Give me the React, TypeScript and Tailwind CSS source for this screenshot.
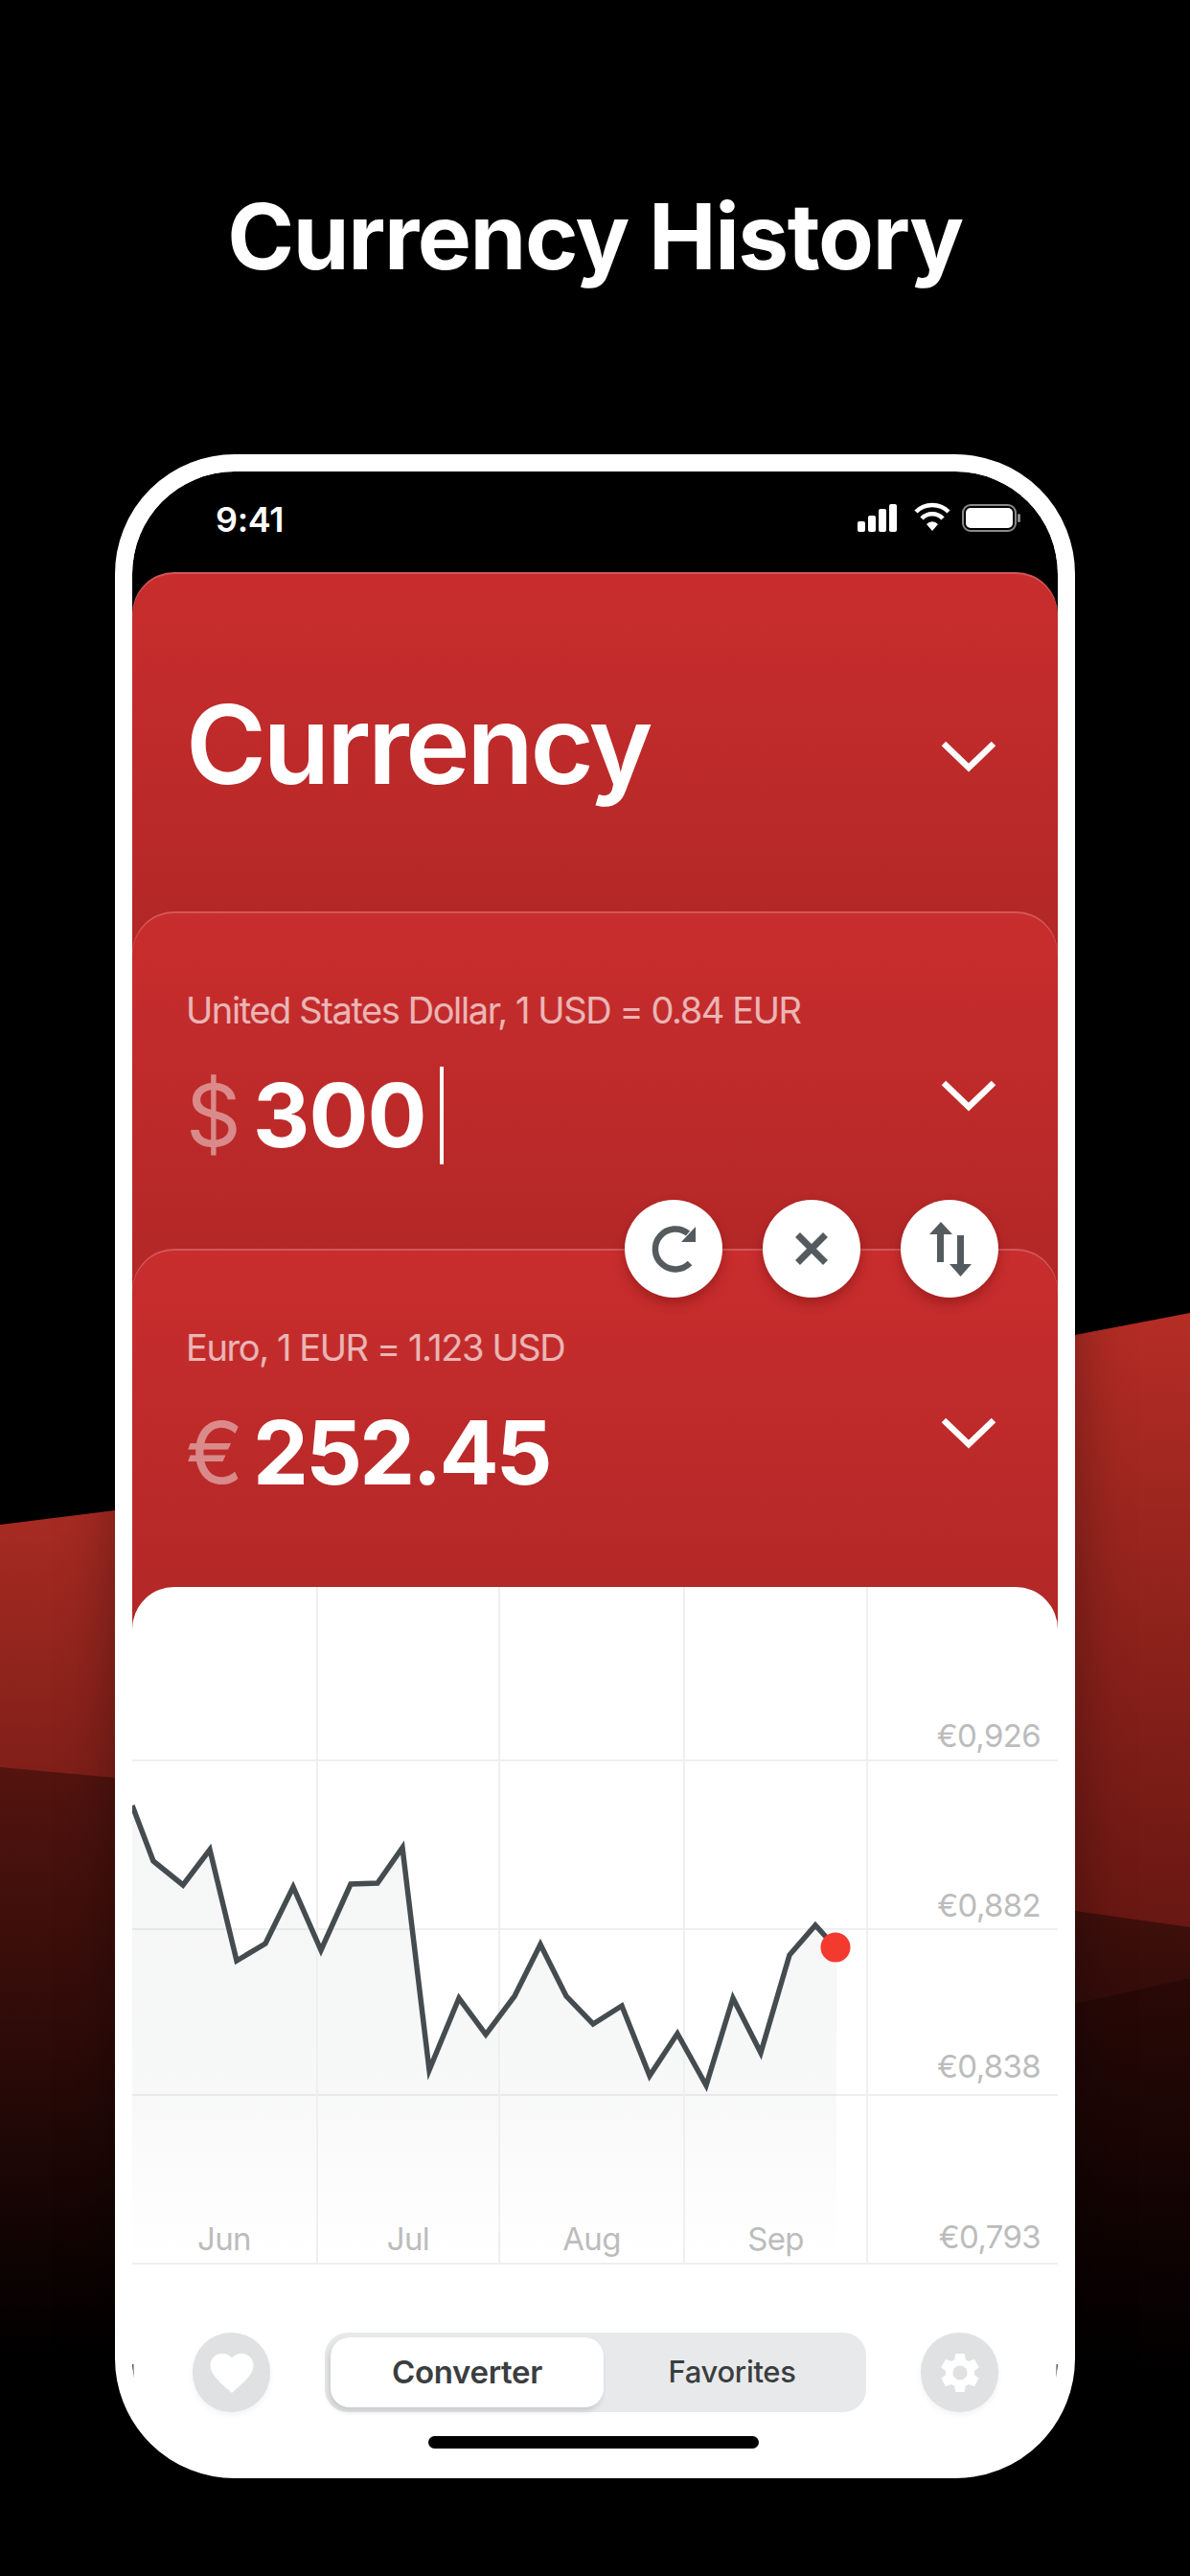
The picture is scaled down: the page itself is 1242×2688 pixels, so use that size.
import { MdFavorite, MdSettings } from "react-icons/md";

const rows = [
  { h: "h-[182px]", pb: "pb-[5px]", label: "€0,926" },
  { h: "h-[176px]", pb: "pb-[4px]", label: "€0,882" },
  { h: "h-[173px]", pb: "pb-[9px]", label: "€0,838" },
  { h: "h-[176px]", pb: "pb-[7px]", label: "€0,793" },
];

const months = [
  { w: "w-[194px]", label: "Jun" },
  { w: "w-[190px]", label: "Jul" },
  { w: "w-[193px]", label: "Aug" },
  { w: "w-[191px]", label: "Sep" },
];

// chart line, in px from the chart panel's top left corner
const line =
  "0,228 22,286 53,311 81,274 109,390 139,372 168,313 197,379 228,310 256,309 282,272 310,504 341,429 369,467 399,427 426,373 453,427 481,456 511,437 540,510 569,466 599,520 627,429 656,486 686,384 713,353 734,376";

function Chevron({ className }: { className: string }) {
  return (
    <svg width="58" height="34" viewBox="0 0 58 34" className={`shrink-0 ${className}`}>
      <path d="M3 4 L29 29 L55 4" fill="none" stroke="#ffffff" strokeWidth="6.5" />
    </svg>
  );
}

function CurrencyCard({ label, symbol, value, valueClass, overlap, cursor }: { label: string; symbol: string; value: string; valueClass: string; overlap: string; cursor?: boolean }) {
  return (
    <div className={`relative flex h-[404px] justify-between rounded-t-[44px] bg-[linear-gradient(180deg,#c92d2d,#b12727)] pl-[56px] pr-[64px] pt-[80px] shadow-[inset_0_2px_0_rgba(255,255,255,0.2)] ${overlap}`}>
      <div>
        <p className="text-[38px] font-normal leading-[46px] tracking-[-0.037em] text-white/65">{label}</p>
        <div className="mt-[36px] flex h-[102px] items-center leading-none">
          <span className="w-[70px] text-[90px] font-normal text-white/45">{symbol}</span>
          <span className={`text-[92px] font-bold text-white ${valueClass}`}>{value}</span>
          {cursor && <span className="ml-[14px] h-[102px] w-[4px] bg-white" />}
        </div>
      </div>
      <Chevron className="mt-[95px]" />
    </div>
  );
}

function RoundButton({ children }: { children: React.ReactNode }) {
  return (
    <button className="flex h-[102px] w-[102px] items-center justify-center rounded-full bg-white shadow-[0_6px_12px_rgba(90,10,10,0.35)]">
      <svg width="102" height="102" viewBox="0 0 102 102" fill="#545b5e">
        {children}
      </svg>
    </button>
  );
}

export default function App() {
  return (
    <div className="relative h-[2688px] w-[1242px] overflow-hidden bg-black font-['Inter',sans-serif]">
      <svg className="absolute inset-0" width="1242" height="2688" viewBox="0 0 1242 2688">
        <defs>
          <linearGradient id="left" x1="0" y1="1576" x2="0" y2="1855" gradientUnits="userSpaceOnUse">
            <stop offset="0" stopColor="#a82b23" />
            <stop offset="1" stopColor="#7f1f18" />
          </linearGradient>
          <linearGradient id="right" x1="0" y1="1370" x2="0" y2="2011" gradientUnits="userSpaceOnUse">
            <stop offset="0" stopColor="#b52d25" />
            <stop offset="1" stopColor="#681712" />
          </linearGradient>
          <linearGradient id="mid" x1="0" y1="1844" x2="0" y2="2460" gradientUnits="userSpaceOnUse">
            <stop offset="0" stopColor="#54140f" />
            <stop offset="1" stopColor="#000000" />
          </linearGradient>
          <linearGradient id="low" x1="0" y1="2064" x2="0" y2="2480" gradientUnits="userSpaceOnUse">
            <stop offset="0" stopColor="#2a0907" />
            <stop offset="1" stopColor="#000000" />
          </linearGradient>
        </defs>
        <polygon points="0,1591 120,1576 400,1576 400,2000 0,2000" fill="url(#left)" />
        <polygon points="800,1450 1122,1393 1242,1370 1242,2100 800,2100" fill="url(#right)" />
        <polygon points="0,1844 120,1855 1122,1994 1242,2011 1242,2688 0,2688" fill="url(#mid)" />
        <polygon points="200,2400 1122,2091 1242,2064 1242,2688 200,2688" fill="url(#low)" />
      </svg>

      <h1 className="relative pt-[191px] text-center text-[94.5px] font-bold leading-[112px] tracking-[-0.015em] text-white">
        Currency History
      </h1>

      <div className="relative mx-auto mt-[171px] h-[2112px] w-[1002px] overflow-hidden rounded-[125px] border-[18px] border-white bg-white shadow-[0_0_60px_rgba(0,0,0,0.35)]">
        <div className="rounded-t-[107px] bg-black">
          <div className="flex h-[105px] items-start justify-between pl-[87px] pr-[35px] pt-[29px]">
            <span className="text-[36px] font-semibold leading-[42px] tracking-[-0.01em] text-white">9:41</span>
            <svg width="174" height="34" viewBox="0 0 174 34" className="mt-[2px]" fill="#ffffff">
              <rect x="0" y="21" width="8" height="11" rx="2" />
              <rect x="11" y="15" width="8" height="17" rx="2" />
              <rect x="22" y="8" width="8" height="24" rx="2" />
              <rect x="33" y="3" width="8" height="29" rx="2" />
              <path d="M61 11 a24 24 0 0 1 34 0" fill="none" stroke="#ffffff" strokeWidth="4.5" />
              <path d="M67 18 a15 15 0 0 1 22 0" fill="none" stroke="#ffffff" strokeWidth="4.5" />
              <path d="M72 24 a8 8 0 0 1 12 0 L78 31 Z" />
              <rect x="110" y="4" width="55" height="27" rx="8" fill="none" stroke="#8a8a8a" strokeWidth="2" />
              <rect x="113" y="7" width="49" height="21" rx="5" />
              <rect x="167" y="13" width="3" height="9" rx="1.5" fill="#8a8a8a" />
            </svg>
          </div>

          <div className="relative -mb-[50px] flex h-[404px] justify-between rounded-t-[44px] bg-[linear-gradient(180deg,#c92d2d,#b12727)] pl-[56px] pr-[64px] pt-[115px] shadow-[inset_0_2px_0_rgba(255,255,255,0.2)]">
            <p className="text-[114px] font-semibold leading-[130px] tracking-[-0.03em] text-white">Currency</p>
            <Chevron className="mt-[60px]" />
          </div>
          <CurrencyCard label="United States Dollar, 1 USD = 0.84 EUR" symbol="$" value="300" valueClass="tracking-[-0.01em]" overlap="-mb-[52px]" cursor />
          <CurrencyCard label="Euro, 1 EUR = 1.123 USD" symbol="€" value="252.45" valueClass="tracking-[-0.03em]" overlap="-mb-[51px]" />
        </div>

        <div className="absolute left-0 right-0 top-[760px] z-10 flex justify-end gap-[42px] pr-[62px]">
          <RoundButton>
            <path d="M66 35 A21 21 0 1 0 68 66" fill="none" stroke="#545b5e" strokeWidth="6.5" />
            <polygon points="74,28 74,44 59,44" />
          </RoundButton>
          <RoundButton>
            <path d="M36.5 36.5 L65.5 65.5 M65.5 36.5 L36.5 65.5" fill="none" stroke="#545b5e" strokeWidth="7" />
          </RoundButton>
          <RoundButton>
            <polygon points="42,23 54,36 45,36 45,65 38,65 38,36 30,36" />
            <polygon points="62.5,80 74,67 66,67 66,37 59,37 59,67 51,67" />
          </RoundButton>
        </div>

        <div className="relative h-[912px] rounded-t-[44px] bg-white">
          {rows.map((r) => (
            <div key={r.label} className={`flex ${r.h} ${r.pb} items-end justify-end border-b-2 border-[#efefef] pr-[18px]`}>
              <span className="text-[33px] leading-[40px] tracking-[-0.02em] text-[#bcbcbc]">{r.label}</span>
            </div>
          ))}

          <svg className="absolute left-0 top-0" width="966" height="707" viewBox="0 0 966 707">
            <defs>
              <linearGradient id="area" x1="0" y1="228" x2="0" y2="704" gradientUnits="userSpaceOnUse">
                <stop offset="0" stopColor="#1f2a3a" stopOpacity="0.042" />
                <stop offset="0.6" stopColor="#1f2a3a" stopOpacity="0.035" />
                <stop offset="1" stopColor="#1f2a3a" stopOpacity="0" />
              </linearGradient>
            </defs>
            <polygon points={`${line} 735,376 735,704 0,704`} fill="url(#area)" />
          </svg>

          <div className="absolute left-0 top-0 flex h-[707px]">
            {months.map((m) => (
              <div key={m.label} className={`flex ${m.w} items-end justify-center border-r-2 border-[#efefef] pb-[7px]`}>
                <span className="text-[33px] leading-[40px] tracking-[-0.02em] text-[#bcbcbc]">{m.label}</span>
              </div>
            ))}
          </div>

          <svg className="absolute left-0 top-0" width="966" height="707" viewBox="0 0 966 707">
            <polyline points={line} fill="none" stroke="#454c50" strokeWidth="5.5" strokeLinejoin="miter" />
            <circle cx="734" cy="376" r="15.5" fill="#f4392f" />
          </svg>

          <div className="absolute left-[63px] right-[62px] top-[778px] flex items-center justify-between">
            <button className="flex h-[83px] w-[81px] items-center justify-center rounded-full bg-[#dfe1e2] shadow-[0_3px_6px_rgba(0,0,0,0.05)]">
              <MdFavorite size={54} color="#ffffff" />
            </button>
            <div className="flex h-[83px] w-[565px] items-center rounded-[24px] bg-[#e8e9ea] pl-[6px]">
              <span className="flex h-[73px] w-[285px] items-center justify-center rounded-[20px] bg-white text-[33px] font-semibold tracking-[-0.01em] text-[#3a3e40] shadow-[-2px_4px_6px_rgba(0,0,0,0.14)]">
                Converter
              </span>
              <span className="flex-1 pr-[6px] text-center text-[31px] font-medium tracking-[-0.01em] text-[#3a3e40]">Favorites</span>
            </div>
            <button className="flex h-[83px] w-[81px] items-center justify-center rounded-full bg-[#dfe1e2] shadow-[0_3px_6px_rgba(0,0,0,0.05)]">
              <MdSettings size={50} color="#ffffff" />
            </button>
          </div>

          <div className="absolute left-[309px] top-[886px] h-[13px] w-[345px] rounded-full bg-black" />
        </div>

        {/* thin dark slivers where the screen edge peeks out at the bottom corners */}
        <svg className="absolute left-0 top-[1975px]" width="6" height="42" viewBox="0 0 6 42">
          <path d="M0.6 0 L1 20 Q2 32 4.5 41" fill="none" stroke="#000000" strokeWidth="1.4" />
        </svg>
        <svg className="absolute right-0 top-[1975px]" width="6" height="42" viewBox="0 0 6 42">
          <path d="M5.4 0 L5 20 Q4 32 1.5 41" fill="none" stroke="#000000" strokeWidth="1.4" />
        </svg>
      </div>
    </div>
  );
}
